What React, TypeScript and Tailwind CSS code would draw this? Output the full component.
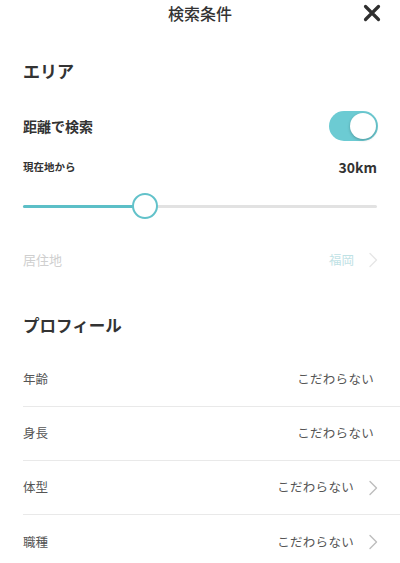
import { useState } from "react";

const font = { fontFamily: '"Noto Sans CJK JP", "Noto Sans", sans-serif' };

function Chevron({ light }: { light?: boolean }) {
  return (
    <svg width="10" height="16" viewBox="0 0 10 16" className="ml-[14px]">
      <polyline
        points="2,1.5 8.5,8 2,14.5"
        fill="none"
        stroke={light ? "#e6e6e6" : "#bdbdbd"}
        strokeWidth="1.4"
        strokeLinecap="round"
        strokeLinejoin="round"
      />
    </svg>
  );
}

function Row({ label, value, arrow }: { label: string; value: string; arrow?: boolean }) {
  return (
    <div className="ml-[23px] h-[54px] flex items-center justify-between pr-[22px] border-b border-[#e9e9e9] last:border-b-0">
      <span className="text-[12.5px] text-[#555]">{label}</span>
      <div className="flex items-center">
        <span className={`text-[12.5px] tracking-[0.3px] text-[#555] ${arrow ? "" : "mr-[4px]"}`}>{value}</span>
        {arrow && <Chevron />}
      </div>
    </div>
  );
}

export default function App() {
  const [on, setOn] = useState(true);
  const pct = 34.5;

  return (
    <div className="w-[400px] h-[563px] bg-white overflow-hidden" style={font}>
      {/* header */}
      <div className="relative h-[25px] flex items-center justify-center">
        <span className="text-[16px] font-medium text-[#333]">検索条件</span>
        <button className="absolute right-[19px] top-[4px]">
          <svg width="18" height="18" viewBox="0 0 18 18">
            <path d="M2.5 2.5 L15.5 15.5 M15.5 2.5 L2.5 15.5" stroke="#2f2f2f" strokeWidth="3.2" strokeLinecap="round" />
          </svg>
        </button>
      </div>

      {/* area */}
      <div className="mt-[28px] h-[36px] px-[23px] flex items-center">
        <span className="text-[17px] font-bold text-[#333]">エリア</span>
      </div>

      <div className="mt-[19px] h-[36px] pl-[23px] pr-[22px] flex items-center justify-between">
        <span className="text-[14px] font-bold text-[#333]">距離で検索</span>
        <button
          onClick={() => setOn(!on)}
          className={`w-[49px] h-[30px] rounded-full p-[2px] flex items-center ${on ? "bg-[#6ccbd3] justify-end" : "bg-[#e5e5e5] justify-start"}`}
        >
          <span className="w-[26px] h-[26px] rounded-full bg-white shadow-[0_1px_3px_rgba(0,0,0,0.25)]" />
        </button>
      </div>

      <div className="mt-[13px] h-[20px] pl-[23px] pr-[23px] flex items-center justify-between">
        <span className="text-[10.5px] font-bold text-[#333]">現在地から</span>
        <span className="text-[14px] font-semibold text-[#333]">30km</span>
      </div>

      {/* slider */}
      <div className="mt-[15px] h-[28px] mx-[23px] relative flex items-center">
        <div className="w-full h-[3px] rounded-full bg-[#e2e2e2]">
          <div className="h-full rounded-full bg-[#5cbfc7]" style={{ width: `${pct}%` }} />
        </div>
        <div
          className="absolute top-[1px] w-[26px] h-[26px] -ml-[13px] rounded-full bg-white border-2 border-[#62c2ca]"
          style={{ left: `${pct}%` }}
        />
      </div>

      <div className="mt-[22px] h-[36px] pl-[23px] pr-[22px] flex items-center justify-between">
        <span className="text-[13px] text-[#cfcfcf]">居住地</span>
        <div className="flex items-center">
          <span className="text-[12.5px] text-[#bfe2e5]">福岡</span>
          <Chevron light />
        </div>
      </div>

      {/* profile */}
      <div className="mt-[29px] h-[36px] px-[23px] flex items-center">
        <span className="text-[16.5px] font-bold text-[#333]">プロフィール</span>
      </div>

      <div className="mt-[10px]">
        <Row label="年齢" value="こだわらない" />
        <Row label="身長" value="こだわらない" />
        <Row label="体型" value="こだわらない" arrow />
        <Row label="職種" value="こだわらない" arrow />
      </div>
    </div>
  );
}
